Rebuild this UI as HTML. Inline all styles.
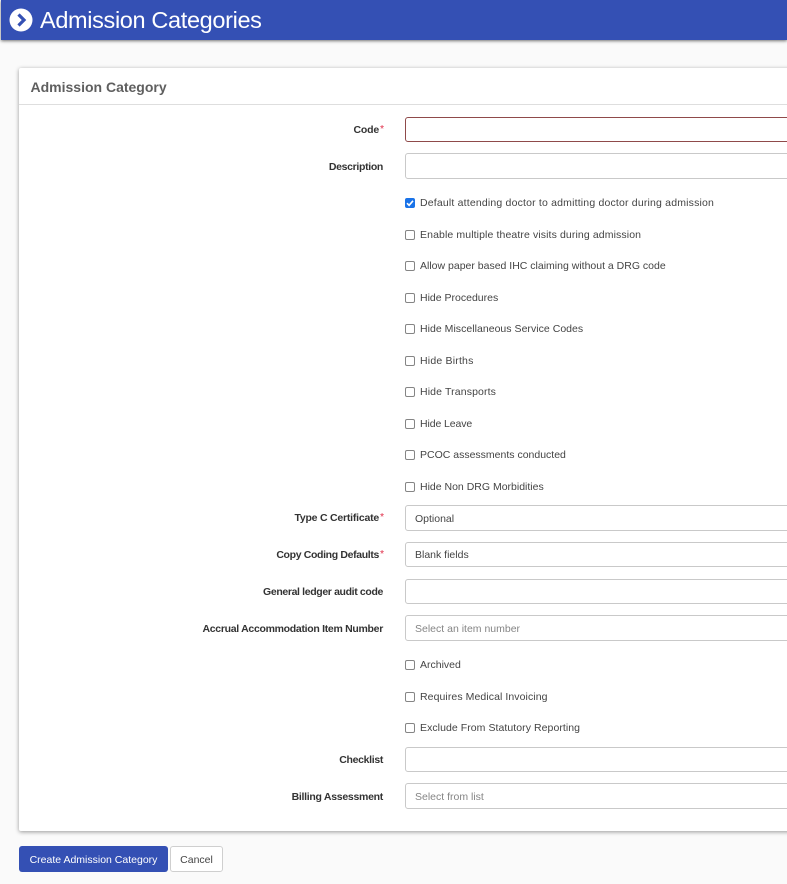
<!DOCTYPE html>
<html>
<head>
<meta charset="utf-8">
<style>
html,body{margin:0;padding:0;width:787px;height:884px;overflow:hidden;background:#fafafa;font-family:"Liberation Sans",sans-serif;color:#333}
#bar{position:absolute;left:1px;top:0;width:786px;height:40px;background:#3450b4;box-shadow:0 1px 3px rgba(0,0,0,.55)}
#title{position:absolute;left:40px;top:6px;font-size:23.5px;line-height:28px;color:#fff;white-space:nowrap;letter-spacing:-.35px}
#ic{position:absolute;left:9px;top:8px}
#card{position:absolute;left:19px;top:68px;width:790px;height:763px;background:#fff;border-radius:2px;box-shadow:0 1px 4px rgba(0,0,0,.4)}
#head{position:absolute;left:30.5px;top:78px;font-size:14px;line-height:18px;font-weight:bold;color:#5f5f5f;white-space:nowrap}
#rule{position:absolute;left:19px;top:104px;width:768px;height:1px;background:#dedede}
.l{position:absolute;right:404px;font-size:10.5px;line-height:14px;font-weight:bold;color:#333;white-space:nowrap;letter-spacing:-.33px}
.l.r{right:408px}
.l b{position:absolute;left:100%;top:-1px;color:#e0304a;font-weight:normal;margin-left:1px}
.f{position:absolute;left:405px;width:400px;box-sizing:border-box;background:#fff;border:1px solid #c9c9c9;border-radius:3px;font-size:10.5px;color:#444;padding-left:9px;white-space:nowrap}
.p{color:#858585}
.c{position:absolute;left:405px;width:10px;height:10px;box-sizing:border-box;background:#fff;border:1px solid #858585;border-radius:2px}
.t{position:absolute;left:420px;font-size:10.5px;line-height:14px;color:#444;white-space:nowrap}
#btn{position:absolute;left:19px;top:846px;width:149px;height:26px;background:#3450b4;border-radius:3px;color:#fff;font-size:10.5px;line-height:28px;text-align:center;white-space:nowrap}
#can{position:absolute;left:170px;top:846px;width:53px;height:26px;box-sizing:border-box;background:#fff;border:1px solid #cfcfcf;border-radius:3px;color:#444;font-size:10.5px;line-height:26px;text-align:center}
</style>
</head>
<body>
<div id="bar"></div>
<svg id="ic" width="24" height="24" viewBox="0 0 24 24"><circle cx="12" cy="12" r="11.5" fill="#fff"/><path d="M9.5 6.5L15 12L9.5 17.5" fill="none" stroke="#3450b4" stroke-width="3.2"/></svg>
<div id="title">Admission Categories</div>
<div id="card"></div>
<div id="head">Admission Category</div>
<div id="rule"></div>

<div class="l r" style="top:123px;letter-spacing:-.2px">Code<b>*</b></div>
<div class="f" style="top:117px;height:25px;border-color:#8f4a4a"></div>
<div class="l" style="top:160px">Description</div>
<div class="f" style="top:153px;height:26px"></div>

<div class="c" style="top:198px;background:#1a73e8;border-color:#1a73e8"><svg style="position:absolute;left:-1px;top:-1px" width="10" height="10" viewBox="0 0 10 10"><path d="M2 5.2L4.1 7.3L8 2.8" fill="none" stroke="#fff" stroke-width="1.6"/></svg></div>
<div class="t" style="top:196px;letter-spacing:.18px">Default attending doctor to admitting doctor during admission</div>
<div class="c" style="top:230px"></div><div class="t" style="top:228px;letter-spacing:.11px">Enable multiple theatre visits during admission</div>
<div class="c" style="top:261px"></div><div class="t" style="top:259px">Allow paper based IHC claiming without a DRG code</div>
<div class="c" style="top:293px"></div><div class="t" style="top:291px">Hide Procedures</div>
<div class="c" style="top:324px"></div><div class="t" style="top:322px;letter-spacing:.03px">Hide Miscellaneous Service Codes</div>
<div class="c" style="top:356px"></div><div class="t" style="top:354px;letter-spacing:.2px">Hide Births</div>
<div class="c" style="top:387px"></div><div class="t" style="top:385px;letter-spacing:.13px">Hide Transports</div>
<div class="c" style="top:419px"></div><div class="t" style="top:417px;letter-spacing:-.1px">Hide Leave</div>
<div class="c" style="top:450px"></div><div class="t" style="top:448px">PCOC assessments conducted</div>
<div class="c" style="top:482px"></div><div class="t" style="top:480px">Hide Non DRG Morbidities</div>

<div class="l r" style="top:511px;letter-spacing:-.22px">Type C Certificate<b>*</b></div>
<div class="f" style="top:505px;height:26px;line-height:26px">Optional</div>
<div class="l r" style="top:548px;letter-spacing:-.35px">Copy Coding Defaults<b>*</b></div>
<div class="f" style="top:542px;height:25px;line-height:25px">Blank fields</div>
<div class="l" style="top:585px;letter-spacing:-.36px">General ledger audit code</div>
<div class="f" style="top:579px;height:25px"></div>
<div class="l" style="top:622px;letter-spacing:-.3px">Accrual Accommodation Item Number</div>
<div class="f p" style="top:615px;height:26px;line-height:26px">Select an item number</div>

<div class="c" style="top:660px"></div><div class="t" style="top:658px">Archived</div>
<div class="c" style="top:692px"></div><div class="t" style="top:690px;letter-spacing:.08px">Requires Medical Invoicing</div>
<div class="c" style="top:723px"></div><div class="t" style="top:721px;letter-spacing:.06px">Exclude From Statutory Reporting</div>

<div class="l" style="top:753px">Checklist</div>
<div class="f" style="top:747px;height:25px"></div>
<div class="l" style="top:790px;letter-spacing:-.28px">Billing Assessment</div>
<div class="f p" style="top:783px;height:26px;line-height:26px">Select from list</div>

<div id="btn">Create Admission Category</div>
<div id="can">Cancel</div>
</body>
</html>
